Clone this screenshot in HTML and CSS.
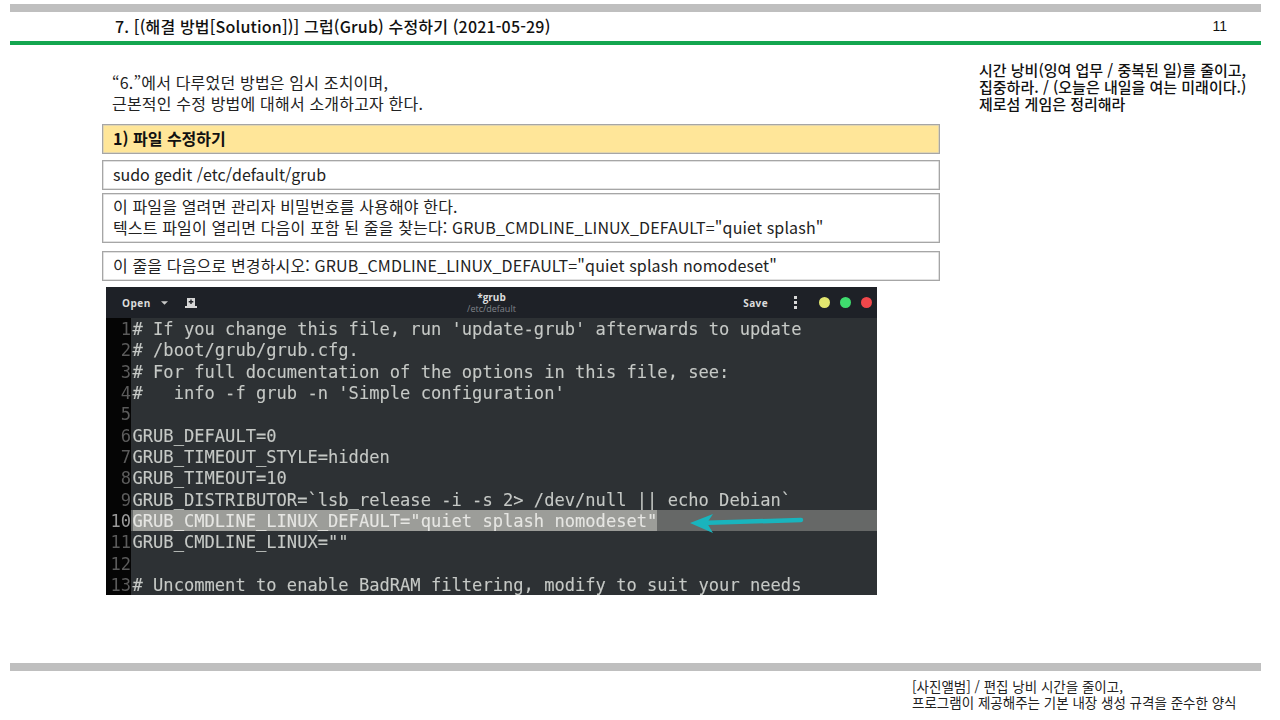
FILE: index.html
```html
<!DOCTYPE html>
<html lang="ko">
<head>
<meta charset="utf-8">
<title>7. 그럽(Grub) 수정하기</title>
<link rel="stylesheet" href="styles.css">
</head>
<body>
<div class="slide">
  <header class="top">
    <div class="bar-gray"></div>
    <div class="title-row">
      <h1 class="title">7. [(해결 방법[Solution])] 그럽(Grub) 수정하기 (2021-05-29)</h1>
      <span class="page-no">11</span>
    </div>
    <div class="bar-green"></div>
  </header>
  <main class="content">
    <section class="left">
      <p class="intro">“6.”에서 다루었던 방법은 임시 조치이며,<br>근본적인 수정 방법에 대해서 소개하고자 한다.</p>
      <div class="box box-head">1) 파일 수정하기</div>
      <div class="box box-cmd">sudo gedit /etc/default/grub</div>
      <div class="box box-two">이 파일을 열려면 관리자 비밀번호를 사용해야 한다.<br>텍스트 파일이 열리면 다음이 포함 된 줄을 찾는다: GRUB_CMDLINE_LINUX_DEFAULT="quiet splash"</div>
      <div class="box box-change">이 줄을 다음으로 변경하시오: GRUB_CMDLINE_LINUX_DEFAULT="quiet splash nomodeset"</div>
      <figure class="term">
        <div class="term-bar">
          <div class="term-left">
            <span class="term-open">Open</span>
            <svg class="caret" width="7" height="4" viewBox="0 0 8 4"><path d="M0 0h8L4 4z" fill="#c9c9c9"/></svg>
            <svg class="newtab" width="12" height="10" viewBox="0 0 12 10"><path d="M2 0h8v8h2v2H0V8h2z" fill="#d6d6d6"/><path d="M5.300 1.500h1.400v1.600h1.600v1.400H6.700v1.600H5.300V4.500H3.700V3.100h1.600z" fill="#1f2126"/></svg>
          </div>
          <div class="term-name"><b>*grub</b><span>/etc/default</span></div>
          <div class="term-right">
            <span class="term-save">Save</span>
            <svg class="kebab" width="3" height="13" viewBox="0 0 3 13"><path d="M0 0h3v3H0zM0 5h3v3H0zM0 10h3v3H0z" fill="#d8d8d8"/></svg>
            <i class="dot dot-y"></i><i class="dot dot-g"></i><i class="dot dot-r"></i>
          </div>
        </div>
        <div class="code">
          <div class="ln"><span class="n">1</span><span class="t"># If you change this file, run 'update-grub' afterwards to update</span></div>
          <div class="ln"><span class="n">2</span><span class="t"># /boot/grub/grub.cfg.</span></div>
          <div class="ln"><span class="n">3</span><span class="t"># For full documentation of the options in this file, see:</span></div>
          <div class="ln"><span class="n">4</span><span class="t">#   info -f grub -n 'Simple configuration'</span></div>
          <div class="ln"><span class="n">5</span><span class="t"></span></div>
          <div class="ln"><span class="n">6</span><span class="t">GRUB_DEFAULT=0</span></div>
          <div class="ln"><span class="n">7</span><span class="t">GRUB_TIMEOUT_STYLE=hidden</span></div>
          <div class="ln"><span class="n">8</span><span class="t">GRUB_TIMEOUT=10</span></div>
          <div class="ln"><span class="n">9</span><span class="t">GRUB_DISTRIBUTOR=`lsb_release -i -s 2&gt; /dev/null || echo Debian`</span></div>
          <div class="ln ln-cur"><span class="n">10</span><span class="t"><span class="sel">GRUB_CMDLINE_LINUX_DEFAULT="quiet splash nomodeset"</span></span></div>
          <div class="ln"><span class="n">11</span><span class="t">GRUB_CMDLINE_LINUX=""</span></div>
          <div class="ln"><span class="n">12</span><span class="t"></span></div>
          <div class="ln"><span class="n">13</span><span class="t"># Uncomment to enable BadRAM filtering, modify to suit your needs</span></div>
        </div>
        <svg class="arrow" width="120" height="24" viewBox="0 0 120 24"><path d="M111 9 L18 11.700" stroke="#19b4bd" stroke-width="4.500" stroke-linecap="round" fill="none"/><path d="M0 12 L23 3 L17 12 L23 22 Z" fill="#19b4bd"/></svg>
      </figure>
    </section>
    <aside class="note">시간 낭비(잉여 업무 / 중복된 일)를 줄이고,<br>집중하라. / (오늘은 내일을 여는 미래이다.)<br>제로섬 게임은 정리해라</aside>
  </main>
  <footer class="foot">
    <div class="bar-gray"></div>
    <p class="foot-text">[사진앨범] / 편집 낭비 시간을 줄이고,<br>프로그램이 제공해주는 기본 내장 생성 규격을 준수한 양식</p>
  </footer>
</div>
</body>
</html>
```
FILE: styles.css
```css
* { box-sizing: border-box; }
html, body { margin: 0; padding: 0; background: #fff; }
body { font-family: "Noto Sans CJK KR", "Noto Sans", sans-serif; color: #1a1a1a; }
.slide { width: 1280px; height: 720px; display: flex; flex-direction: column; overflow: hidden; padding-top: 4px; }
.bar-gray { height: 8px; margin: 0 19px 0 10px; background: #bfbfbf; }
.bar-green { height: 4px; margin: 0 19px 0 10px; background: #14a650; }
.title-row { height: 29px; display: flex; align-items: center; justify-content: space-between; padding: 0 53px 0 115px; }
.title { margin: 0; font-size: 16px; font-weight: 500; letter-spacing: 0.16px; color: #111; line-height: 29px; }
.page-no { margin-bottom: 2px; font-family: "Liberation Sans", sans-serif; font-size: 14px; color: #111; }
.content { flex: 1; display: flex; align-items: flex-start; }
.left { margin-left: 102px; width: 838px; display: flex; flex-direction: column; }
.intro { margin: 27px 0 10px 10px; font-size: 16px; line-height: 21px; letter-spacing: 0.18px; color: #222; }
.box { border: 1px solid #a6a6a6; padding: 0 0 2px 10px; font-size: 16px; letter-spacing: 0.15px; color: #222; display: flex; align-items: center; box-shadow: inset 0 0 0 0.5px #c4c4c4; }
.box-head { height: 30px; background: #ffe699; font-weight: 700; color: #111; letter-spacing: 0; }
.box-cmd { height: 30px; margin-top: 6px; letter-spacing: 0; }
.box-two { height: 50px; margin-top: 3px; display: block; line-height: 21px; padding-top: 2px; }
.box-change { height: 30px; margin-top: 8px; }
.term { position: relative; margin: 6px 0 0 4px; width: 771px; height: 308px; background: #2d3134; overflow: hidden; }
.term-bar { height: 31px; background: #1e2127; display: grid; grid-template-columns: 1fr auto 1fr; align-items: center; padding: 0 5px; font-family: "Open Sans", sans-serif; color: #dcdcdc; }
.term-left { display: flex; align-items: center; margin-left: 11px; font-size: 10px; font-weight: 700; letter-spacing: 0.5px; }
.caret { margin-left: 10px; }
.newtab { margin-left: 17px; }
.term-name { display: flex; flex-direction: column; align-items: center; line-height: 12px; }
.term-name b { font-size: 10px; }
.term-name span { font-size: 9px; color: #80838a; }
.term-right { display: flex; align-items: center; justify-content: flex-end; }
.term-save { font-size: 10px; font-weight: 700; letter-spacing: 0.4px; margin-right: 26px; }
.kebab { margin-right: 22px; }
.dot { width: 11px; height: 11px; border-radius: 50%; margin-left: 10px; }
.kebab + .dot { margin-left: 0; }
.dot-y { background: #e2e66f; }
.dot-g { background: #3fdc6e; }
.dot-r { background: #f1474b; }
.code { font-family: "DejaVu Sans Mono", monospace; font-size: 17.100px; filter: blur(0.45px); color: #c6c9c6; -webkit-text-stroke: 0.1px #c6c9c6; }
.ln { display: flex; height: 21.330px; line-height: 21.330px; white-space: pre; }
.n { width: 25px; flex: none; padding-top: 1px; background: #050505; color: #5b5b5b; -webkit-text-stroke: 0; text-align: right; }
.t { flex: 1; padding: 1px 0 0 1.500px; }
.ln-cur .t { padding-top: 0; background: #666867; }
.ln-cur .n { color: #9a9a9a; }
.sel { display: inline-block; height: 21.330px; padding-top: 1px; background: #9c9d99; color: #e6e6e3; -webkit-text-stroke: 0.1px #e6e6e3; }
.arrow { position: absolute; left: 584px; top: 224px; }
.note { margin: 16px 0 0 39px; font-size: 15px; font-weight: 500; line-height: 17px; color: #111; white-space: nowrap; }
.foot { height: 57px; flex: none; }
.foot-text { margin: 7px 0 0 912px; font-size: 13.500px; line-height: 16px; color: #222; white-space: nowrap; }
```
